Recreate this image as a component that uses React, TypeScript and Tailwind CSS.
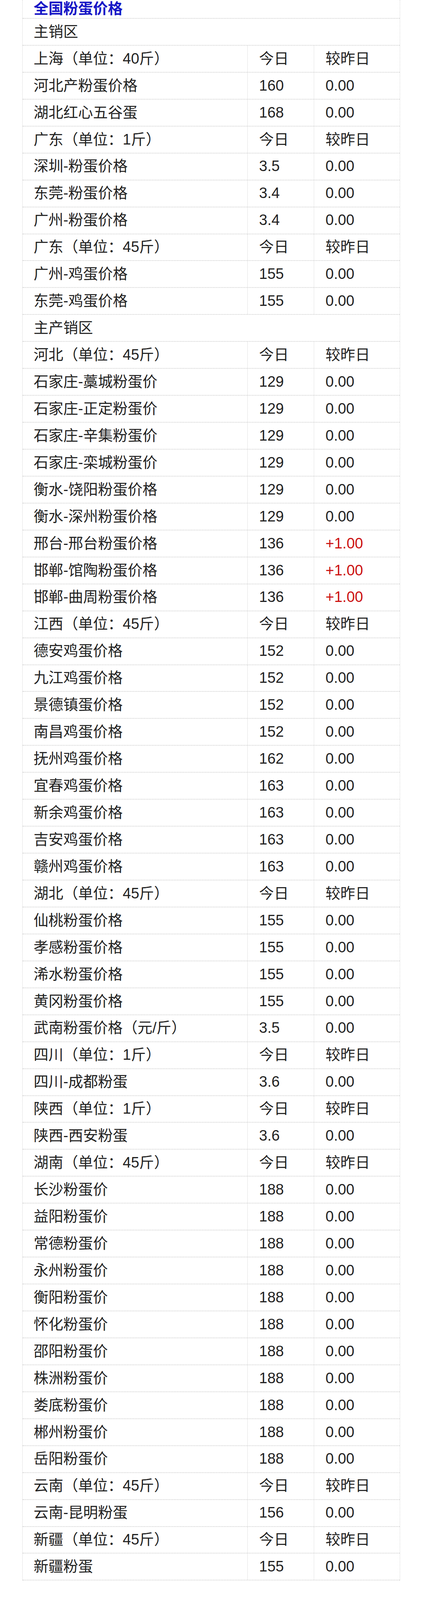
import React from "react";

type Row =
  | { kind: "section"; text: string }
  | { kind: "head"; text: string }
  | { kind: "data"; text: string; today: string; diff: string };

const h = (text: string): Row => ({ kind: "head", text });
const d = (text: string, today: string, diff = "0.00"): Row => ({ kind: "data", text, today, diff });

const rows: Row[] = [
  { kind: "section", text: "主销区" },
  h("上海（单位：40斤）"),
  d("河北产粉蛋价格", "160"),
  d("湖北红心五谷蛋", "168"),
  h("广东（单位：1斤）"),
  d("深圳-粉蛋价格", "3.5"),
  d("东莞-粉蛋价格", "3.4"),
  d("广州-粉蛋价格", "3.4"),
  h("广东（单位：45斤）"),
  d("广州-鸡蛋价格", "155"),
  d("东莞-鸡蛋价格", "155"),
  { kind: "section", text: "主产销区" },
  h("河北（单位：45斤）"),
  d("石家庄-藁城粉蛋价", "129"),
  d("石家庄-正定粉蛋价", "129"),
  d("石家庄-辛集粉蛋价", "129"),
  d("石家庄-栾城粉蛋价", "129"),
  d("衡水-饶阳粉蛋价格", "129"),
  d("衡水-深州粉蛋价格", "129"),
  d("邢台-邢台粉蛋价格", "136", "+1.00"),
  d("邯郸-馆陶粉蛋价格", "136", "+1.00"),
  d("邯郸-曲周粉蛋价格", "136", "+1.00"),
  h("江西（单位：45斤）"),
  d("德安鸡蛋价格", "152"),
  d("九江鸡蛋价格", "152"),
  d("景德镇蛋价格", "152"),
  d("南昌鸡蛋价格", "152"),
  d("抚州鸡蛋价格", "162"),
  d("宜春鸡蛋价格", "163"),
  d("新余鸡蛋价格", "163"),
  d("吉安鸡蛋价格", "163"),
  d("赣州鸡蛋价格", "163"),
  h("湖北（单位：45斤）"),
  d("仙桃粉蛋价格", "155"),
  d("孝感粉蛋价格", "155"),
  d("浠水粉蛋价格", "155"),
  d("黄冈粉蛋价格", "155"),
  d("武南粉蛋价格（元/斤）", "3.5"),
  h("四川（单位：1斤）"),
  d("四川-成都粉蛋", "3.6"),
  h("陕西（单位：1斤）"),
  d("陕西-西安粉蛋", "3.6"),
  h("湖南（单位：45斤）"),
  d("长沙粉蛋价", "188"),
  d("益阳粉蛋价", "188"),
  d("常德粉蛋价", "188"),
  d("永州粉蛋价", "188"),
  d("衡阳粉蛋价", "188"),
  d("怀化粉蛋价", "188"),
  d("邵阳粉蛋价", "188"),
  d("株洲粉蛋价", "188"),
  d("娄底粉蛋价", "188"),
  d("郴州粉蛋价", "188"),
  d("岳阳粉蛋价", "188"),
  h("云南（单位：45斤）"),
  d("云南-昆明粉蛋", "156"),
  h("新疆（单位：45斤）"),
  d("新疆粉蛋", "155"),
];

const rowCls = "flex h-[68.94px] border-b-2 border-dotted border-[#cfcfcf]";
const cell1 =
  "w-[576px] shrink-0 flex items-center pl-[28px] border-r border-dotted border-[#c8c8c8]";
const cell2 =
  "w-[170px] shrink-0 flex items-center pl-[29px] border-r border-dotted border-[#c8c8c8]";
const cell3 = "w-[219px] shrink-0 flex items-center pl-[29px]";

export default function App() {
  return (
    <div className="bg-white w-[1080px] h-[4096px] overflow-hidden text-[38px] leading-[1.3] text-[#222] font-['Liberation_Sans','Noto_Sans_CJK_SC',sans-serif]">
      <div className="ml-[57px] w-[967px] border-l border-r border-dotted border-[#c8c8c8]">
        <div className="flex h-[48px] border-b-2 border-dotted border-[#cfcfcf]">
          <div className="flex items-center pl-[28px] font-bold text-[#1717c6]">全国粉蛋价格</div>
        </div>
        {rows.map((r, i) => {
          if (r.kind === "section") {
            return (
              <div key={i} className={rowCls}>
                <div className="flex items-center pl-[28px]">{r.text}</div>
              </div>
            );
          }
          if (r.kind === "head") {
            return (
              <div key={i} className={rowCls}>
                <div className={cell1}>{r.text}</div>
                <div className={cell2}>今日</div>
                <div className={cell3}>较昨日</div>
              </div>
            );
          }
          return (
            <div key={i} className={rowCls}>
              <div className={cell1}>{r.text}</div>
              <div className={cell2}>{r.today}</div>
              <div className={r.diff.startsWith("+") ? cell3 + " text-[#cc1111]" : cell3}>{r.diff}</div>
            </div>
          );
        })}
      </div>
    </div>
  );
}
